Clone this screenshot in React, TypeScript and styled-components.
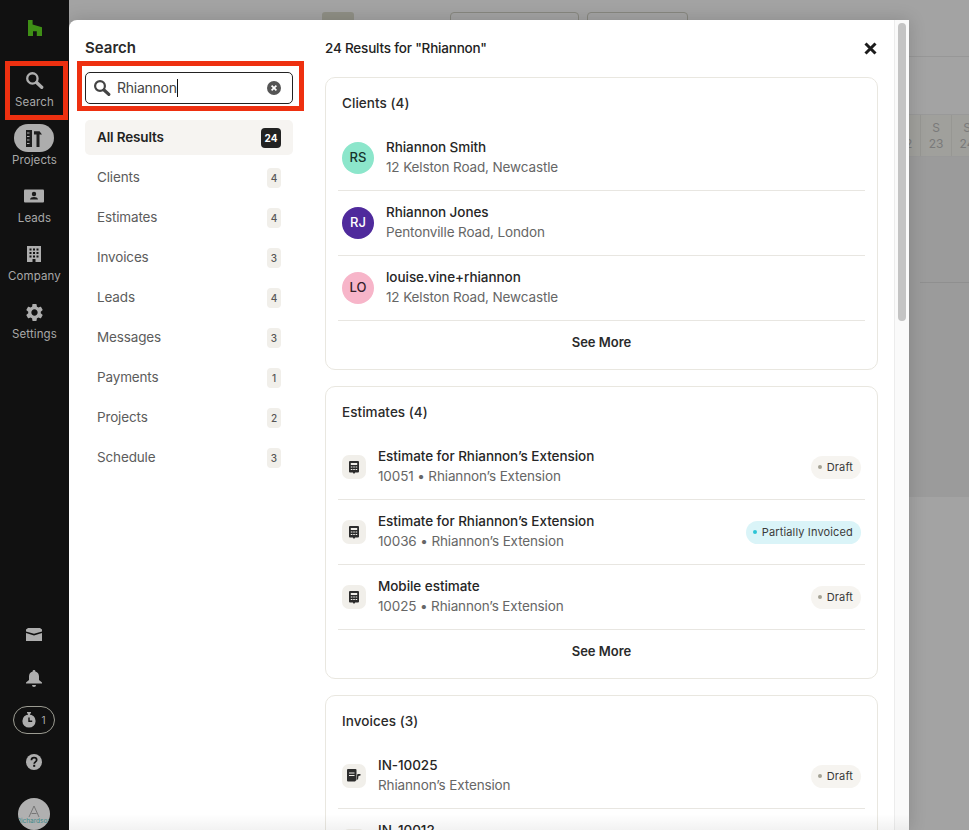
import React from "react";
import styled, { createGlobalStyle } from "styled-components";
import { MdSettings } from "react-icons/md";

const Global = createGlobalStyle`
  html, body { margin: 0; padding: 0; background: #a2a2a2; overflow: hidden; }
  *, *::before, *::after { box-sizing: border-box; }
  body { font-family: Inter, "Liberation Sans", sans-serif; }
`;

const Page = styled.div`
  width: 969px;
  height: 830px;
  display: flex;
  overflow: hidden;
`;

const Sidebar = styled.nav`
  width: 69px;
  flex: none;
  height: 830px;
  background: #111;
  display: flex;
  flex-direction: column;
  align-items: center;
  padding-top: 20px;
  color: #aeaeae;
  position: relative;
  z-index: 1;
`;

const LogoBox = styled.div`
  height: 46px;
  flex: none;
`;

const NavItem = styled.div<{ $marked?: boolean }>`
  width: 69px;
  height: 58px;
  flex: none;
  position: relative;
  display: flex;
  flex-direction: column;
  align-items: center;
  ${(p) =>
    p.$marked &&
    `&::after {
      content: "";
      position: absolute;
      left: 5px; top: -5px;
      width: 63px; height: 59px;
      border: 5px solid #ee3010;
    }`}
`;

const NavIcon = styled.div<{ $pill?: boolean }>`
  width: 40px;
  height: 28px;
  margin-left: -1px;
  display: flex;
  align-items: center;
  justify-content: center;
  border-radius: 14px;
  background: ${(p) => (p.$pill ? "#adadad" : "transparent")};
  color: ${(p) => (p.$pill ? "#1c1c1c" : "#aeaeae")};
`;

const NavLabel = styled.span`
  font-size: 11.5px;
  line-height: 16px;
  letter-spacing: 0.1px;
  color: #a8a8a8;
  white-space: nowrap;
`;

const SideBottom = styled.div`
  margin-top: auto;
  display: flex;
  flex-direction: column;
  align-items: center;
  height: 214px;
  flex: none;
`;

const SideIcon = styled.div<{ $h: number }>`
  height: ${(p) => p.$h}px;
  margin-left: -1px;
  display: flex;
  align-items: center;
  justify-content: center;
  flex: none;
`;

const TimerPill = styled.div`
  width: 42px;
  height: 28px;
  margin: 2px 0 0 -1px;
  flex: none;
  border: 1px solid #9c9c92;
  border-radius: 14px;
  display: flex;
  align-items: center;
  justify-content: center;
  gap: 5px;
  font-size: 10px;
  color: #aeaeae;
`;

const OrgAvatar = styled.div`
  width: 32px;
  height: 32px;
  margin: 8px 0 0 -1px;
  flex: none;
  border-radius: 50%;
  background: #b0b0b0;
  display: flex;
  flex-direction: column;
  align-items: center;
  justify-content: center;
  overflow: hidden;
  padding-top: 1px;
`;

const OrgName = styled.span`
  font-size: 6.5px;
  line-height: 7px;
  color: #3f8b8b;
  white-space: nowrap;
`;

const Main = styled.main`
  position: relative;
  flex: 1;
  height: 830px;
  overflow: hidden;
  background: #a3a3a3;
`;

const TopBar = styled.div`
  height: 57px;
  border-bottom: 1px solid #979797;
  padding: 12px 0 0 253px;
  display: flex;
  align-items: flex-start;
`;

const GhostTab = styled.div`
  width: 32px;
  height: 20px;
  background: #8f8f85;
  border-radius: 3px;
  margin-right: 96px;
`;

const GhostButton = styled.div<{ $w: number }>`
  width: ${(p) => p.$w}px;
  height: 30px;
  margin-right: 8px;
  border: 1px solid #87877f;
  border-radius: 4px;
`;

const CalendarHead = styled.div`
  height: 57px;
`;

const DayRow = styled.div`
  height: 43px;
  padding-left: 820px;
  display: flex;
  border-top: 1px solid #999;
  border-bottom: 1px solid #999;
  background: #a0a09c;
`;

const DayCell = styled.div`
  width: 31px;
  flex: none;
  border-left: 1px solid #979793;
  text-align: center;
  font-size: 12px;
  line-height: 16px;
  padding-top: 5px;
  color: #7a7a7a;
`;

const CalendarBody = styled.div`
  height: 340px;
  background: #9b9b9b;
  padding-left: 851px;
`;

const BodyLine = styled.div`
  height: 126px;
  border-bottom: 1px solid #8f8f8f;
`;

const Modal = styled.section`
  position: absolute;
  left: 0;
  top: 20px;
  width: 840px;
  height: 810px;
  background: #fff;
  border-radius: 8px 0 0 0;
  box-shadow: 0 0 18px rgba(0, 0, 0, 0.16);
  display: flex;
  overflow: hidden;
  color: #222;
`;

const BottomFade = styled.div`
  position: absolute;
  left: 0;
  right: 0;
  bottom: 0;
  height: 16px;
  background: linear-gradient(rgba(0, 0, 0, 0), rgba(0, 0, 0, 0.05));
  pointer-events: none;
`;

const LeftPanel = styled.aside`
  width: 256px;
  flex: none;
  padding: 18px 32px 0 16px;
  display: flex;
  flex-direction: column;
`;

const PanelTitle = styled.h2`
  margin: 0 0 14px;
  font-size: 15px;
  line-height: 20px;
  font-weight: 600;
  color: #2a2a2a;
`;

const SearchWrap = styled.div`
  position: relative;
  height: 32px;
  margin-bottom: 16px;
  &::after {
    content: "";
    position: absolute;
    left: -8px;
    right: -11px;
    top: -11px;
    bottom: -7px;
    border: 5px solid #ee3010;
    pointer-events: none;
  }
`;

const SearchField = styled.div`
  height: 32px;
  border: 1px solid #222;
  border-radius: 5px;
  display: flex;
  align-items: center;
  padding: 0 11px 0 7px;
  font-size: 14px;
  color: #444;
`;

const SearchText = styled.span`
  margin-left: 6px;
  letter-spacing: -0.25px;
  border-right: 1px solid #111;
  line-height: 18px;
  white-space: nowrap;
`;

const ClearIcon = styled.span`
  margin-left: auto;
  display: flex;
`;

const FilterList = styled.div`
  display: flex;
  flex-direction: column;
  gap: 5px;
`;

const Filter = styled.div<{ $active?: boolean }>`
  height: 35px;
  display: flex;
  align-items: center;
  justify-content: space-between;
  padding: 0 12px 2px;
  border-radius: 5px;
  font-size: 13.5px;
  letter-spacing: -0.15px;
  font-weight: ${(p) => (p.$active ? 600 : 400)};
  color: ${(p) => (p.$active ? "#222" : "#5c5c5c")};
  background: ${(p) => (p.$active ? "#f6f4f1" : "transparent")};
`;

const Count = styled.span<{ $active?: boolean }>`
  height: 20px;
  margin-bottom: -2px;
  min-width: ${(p) => (p.$active ? 20 : 14)}px;
  display: flex;
  align-items: center;
  justify-content: center;
  border-radius: 4px;
  font-size: 10px;
  letter-spacing: 0;
  font-weight: ${(p) => (p.$active ? 700 : 500)};
  color: ${(p) => (p.$active ? "#fff" : "#555")};
  background: ${(p) => (p.$active ? "#222" : "#f1efea")};
`;

const Results = styled.div`
  flex: 1;
  min-width: 0;
  padding: 18px 16px 0 0;
  overflow: hidden;
`;

const ResultsHead = styled.header`
  height: 20px;
  margin-bottom: 19px;
  display: flex;
  align-items: center;
  justify-content: space-between;
  padding-right: 1px;
  font-size: 13.5px;
  font-weight: 500;
  letter-spacing: -0.2px;
`;

const Card = styled.article`
  border: 1px solid #e9e7e0;
  border-radius: 10px;
  padding: 15px 12px 6px;
  margin-bottom: 16px;
`;

const CardTitle = styled.h3`
  margin: 0 0 13px 4px;
  height: 20px;
  font-size: 13.5px;
  line-height: 20px;
  font-weight: 500;
  letter-spacing: 0.05px;
  color: #2a2a2a;
`;

const Row = styled.div`
  height: 65px;
  border-bottom: 1px solid #e8e6e1;
  display: flex;
  align-items: center;
  padding: 0 4px;
  gap: 12px;
`;

const Avatar = styled.div<{ $bg: string; $fg: string }>`
  width: 32px;
  height: 32px;
  flex: none;
  border-radius: 50%;
  display: flex;
  align-items: center;
  justify-content: center;
  font-size: 13px;
  font-weight: 500;
  padding-bottom: 2px;
  background: ${(p) => p.$bg};
  color: ${(p) => p.$fg};
`;

const Tile = styled.div`
  width: 24px;
  height: 24px;
  flex: none;
  border-radius: 7px;
  background: #f1efea;
  display: flex;
  align-items: center;
  justify-content: center;
`;

const RowText = styled.div`
  flex: 1;
  min-width: 0;
  padding-bottom: 2px;
`;

const RowTitle = styled.div`
  font-size: 13.5px;
  line-height: 20px;
  font-weight: 500;
  letter-spacing: -0.05px;
  color: #262626;
`;

const RowSub = styled.div`
  font-size: 13.5px;
  line-height: 20px;
  letter-spacing: -0.13px;
  color: #666;
`;

const Status = styled.span<{ $tone: "draft" | "info" }>`
  height: 23px;
  flex: none;
  display: inline-flex;
  align-items: center;
  gap: 5px;
  padding: 0 8px 0 6.5px;
  border-radius: 12px;
  font-size: 11px;
  letter-spacing: 0.15px;
  color: #3a3a3a;
  background: ${(p) => (p.$tone === "info" ? "#daf4f8" : "#f6f4f0")};
  &::before {
    content: "";
    width: 4px;
    height: 4px;
    border-radius: 50%;
    background: ${(p) => (p.$tone === "info" ? "#2cc4d6" : "#a5a295")};
  }
`;

const SeeMore = styled.div`
  height: 42px;
  display: flex;
  align-items: center;
  justify-content: center;
  font-size: 13px;
  font-weight: 600;
  color: #2a2a2a;
`;

const ScrollTrack = styled.div`
  width: 15px;
  flex: none;
  border-left: 1px solid #ececec;
  background: #fafafa;
  padding: 3px 3px 0 3px;
`;

const ScrollThumb = styled.div`
  height: 298px;
  border-radius: 4px;
  background: #c4c4c4;
`;

const SearchGlyph = ({ size = 18 }: { size?: number }) => (
  <svg width={size} height={size} viewBox="0 0 18 18" fill="none">
    <circle cx="7" cy="7" r="4.9" stroke="currentColor" strokeWidth="2.2" />
    <path d="M11 11l4.800 4.400" stroke="currentColor" strokeWidth="3.200" strokeLinecap="round" />
  </svg>
);

const HouzzLogo = () => (
  <svg width="14" height="16" viewBox="0 0 14 16">
    <path d="M0 0h4.600v4.400L14 7.200V16H8.800v-4.800H5V16H0z" fill="#3f8f16" />
  </svg>
);

const ProjectsGlyph = () => (
  <svg width="16" height="17" viewBox="0 0 16 17" fill="currentColor">
    <path d="M0 0h6v17H0zM1 2.500v1h2.500v-1zM1 6v1h2.500V6zM1 9.500v1h2.500v-1zM1 13v1h2.500v-1z" fillRule="evenodd" />
    <path d="M8 1.200h5.500L16 4.600h-2.500V17h-3V4.600H8z" />
  </svg>
);

const LeadsGlyph = () => (
  <svg width="20" height="14" viewBox="0 0 20 14">
    <rect width="20" height="13" y="0.5" rx="1" fill="#aeaeae" />
    <circle cx="10" cy="5" r="2.200" fill="#1c1c1c" />
    <path d="M6 10.500c.4-2 2-2.600 4-2.600s3.600.6 4 2.600z" fill="#1c1c1c" />
  </svg>
);

const CompanyGlyph = () => (
  <svg width="14" height="16" viewBox="0 0 14 16" fill="#aeaeae">
    <path
      fillRule="evenodd"
      d="M0 0h14v16H8.500v-3h-3v3H0zM2.500 2.500v2h2v-2zM6 2.500v2h2v-2zM9.500 2.500v2h2v-2zM2.500 6v2h2V6zM6 6v2h2V6zM9.500 6v2h2V6zM2.500 9.500v2h2v-2zM6 9.500v2h2v-2zM9.500 9.500v2h2v-2z"
    />
  </svg>
);

const MailGlyph = () => (
  <svg width="16" height="13" viewBox="0 0 16 13" fill="#aeaeae">
    <path d="M0 1.600 2 0h12l2 1.600v1.800L8 5.800 0 3.400zM0 5l8 2.600L16 5v8H0z" />
  </svg>
);

const BellGlyph = () => (
  <svg width="16" height="17" viewBox="0 0 16 17" fill="#aeaeae">
    <path d="M8 0a1.300 1.300 0 0 1 1.300 1.500C11.800 2 13 4 13 6.500V10l3 2.500V13.500H0v-1L3 10V6.500C3 4 4.200 2 6.700 1.500A1.300 1.300 0 0 1 8 0z" />
    <path d="M6 15h4a2 2 0 0 1-4 0z" />
  </svg>
);

const TimerGlyph = () => (
  <svg width="14" height="16" viewBox="0 0 14 16">
    <path d="M5 0h4v1.500H8v1.600H6V1.500H5z" fill="#aeaeae" />
    <circle cx="7" cy="9" r="6.600" fill="#aeaeae" />
    <path d="M7 5.500V9.300h3.200" stroke="#111" strokeWidth="1.400" fill="none" />
  </svg>
);

const HelpGlyph = () => (
  <svg width="16" height="16" viewBox="0 0 16 16">
    <circle cx="8" cy="8" r="8" fill="#aeaeae" />
    <path d="M5.400 6.200C5.500 4.600 6.600 3.700 8 3.700s2.700.9 2.700 2.300c0 1.900-2.500 1.900-2.500 3.800" stroke="#111" strokeWidth="1.700" fill="none" />
    <rect x="7.200" y="10.800" width="2" height="2" fill="#111" />
  </svg>
);

const OrgMark = () => (
  <svg width="12" height="13" viewBox="0 0 12 12" fill="none" stroke="#6f6f6f" strokeWidth="0.9">
    <path d="M6 0.500 1 11.500M6 0.500l5 11M3.500 8h5" />
  </svg>
);

const ClearGlyph = () => (
  <svg width="14" height="14" viewBox="0 0 14 14">
    <circle cx="7" cy="7" r="7" fill="#555" />
    <path d="M4.600 4.600l4.800 4.800M9.400 4.600L4.600 9.400" stroke="#fff" strokeWidth="1.700" />
  </svg>
);

const CloseGlyph = () => (
  <svg width="13" height="13" viewBox="0 0 13 13">
    <path d="M1.500 1.500l10 10M11.500 1.500l-10 10" stroke="#1c1c1c" strokeWidth="3" />
  </svg>
);

const CalcGlyph = () => (
  <svg width="10" height="13" viewBox="0 0 10 13" fill="#2c2c2c">
    <path
      fillRule="evenodd"
      d="M0 1a1 1 0 0 1 1-1h8a1 1 0 0 1 1 1v9.500a1 1 0 0 1-1 1H6.200L5 13l-1.200-1.500H1a1 1 0 0 1-1-1zM1.800 2v2h6.400V2zM1.800 5.500v1h1.600v-1zM4.200 5.500v1h1.600v-1zM6.600 5.500v1h1.600v-1zM1.800 8v1h1.600V8zM4.200 8v1h1.600V8zM6.600 8v1h1.600V8z"
    />
  </svg>
);

const InvoiceGlyph = () => (
  <svg width="14" height="14" viewBox="0 0 14 14" fill="#2c2c2c">
    <path
      fillRule="evenodd"
      d="M0 1a1 1 0 0 1 1-1h7.500a1 1 0 0 1 1 1v10l-1.500 1.500H1a1 1 0 0 1-1-1zM2 3.500v1h5.500v-1zM2 6v1h5.500V6z"
    />
    <path d="M10.500 5h3v1.400l-2 .6-.5 3.500h-1.200L10 6.500z" />
  </svg>
);

type Item = {
  title: string;
  sub: string;
  initials?: [string, string, string];
  glyph?: "calc" | "invoice";
  status?: [string, "draft" | "info"];
};

const sections: { title: string; more: boolean; items: Item[] }[] = [
  {
    title: "Clients (4)",
    more: true,
    items: [
      { title: "Rhiannon Smith", sub: "12 Kelston Road, Newcastle", initials: ["RS", "#8ce6cb", "#17332b"] },
      { title: "Rhiannon Jones", sub: "Pentonville Road, London", initials: ["RJ", "#4f2a9c", "#ffffff"] },
      { title: "louise.vine+rhiannon", sub: "12 Kelston Road, Newcastle", initials: ["LO", "#f7b5c9", "#33212a"] },
    ],
  },
  {
    title: "Estimates (4)",
    more: true,
    items: [
      { title: "Estimate for Rhiannon’s Extension", sub: "10051 • Rhiannon’s Extension", glyph: "calc", status: ["Draft", "draft"] },
      { title: "Estimate for Rhiannon’s Extension", sub: "10036 • Rhiannon’s Extension", glyph: "calc", status: ["Partially Invoiced", "info"] },
      { title: "Mobile estimate", sub: "10025 • Rhiannon’s Extension", glyph: "calc", status: ["Draft", "draft"] },
    ],
  },
  {
    title: "Invoices (3)",
    more: false,
    items: [
      { title: "IN-10025", sub: "Rhiannon’s Extension", glyph: "invoice", status: ["Draft", "draft"] },
      { title: "IN-10012", sub: "Rhiannon’s Extension", glyph: "invoice", status: ["Draft", "draft"] },
    ],
  },
];

const filters: [string, string][] = [
  ["Clients", "4"],
  ["Estimates", "4"],
  ["Invoices", "3"],
  ["Leads", "4"],
  ["Messages", "3"],
  ["Payments", "1"],
  ["Projects", "2"],
  ["Schedule", "3"],
];

export default function App() {
  return (
    <Page>
      <Global />
      <Sidebar>
        <LogoBox>
          <HouzzLogo />
        </LogoBox>
        <NavItem $marked>
          <NavIcon>
            <SearchGlyph size={19} />
          </NavIcon>
          <NavLabel>Search</NavLabel>
        </NavItem>
        <NavItem>
          <NavIcon $pill>
            <ProjectsGlyph />
          </NavIcon>
          <NavLabel>Projects</NavLabel>
        </NavItem>
        <NavItem>
          <NavIcon>
            <LeadsGlyph />
          </NavIcon>
          <NavLabel>Leads</NavLabel>
        </NavItem>
        <NavItem>
          <NavIcon>
            <CompanyGlyph />
          </NavIcon>
          <NavLabel>Company</NavLabel>
        </NavItem>
        <NavItem>
          <NavIcon>
            <MdSettings size={21} />
          </NavIcon>
          <NavLabel>Settings</NavLabel>
        </NavItem>
        <SideBottom>
          <SideIcon $h={36}>
            <MailGlyph />
          </SideIcon>
          <SideIcon $h={52}>
            <BellGlyph />
          </SideIcon>
          <TimerPill>
            <TimerGlyph />1
          </TimerPill>
          <SideIcon $h={56}>
            <HelpGlyph />
          </SideIcon>
          <OrgAvatar>
            <OrgMark />
            <OrgName>Richardson</OrgName>
          </OrgAvatar>
        </SideBottom>
      </Sidebar>
      <Main>
        <TopBar>
          <GhostTab />
          <GhostButton $w={129} />
          <GhostButton $w={101} />
        </TopBar>
        <CalendarHead />
        <DayRow>
          <DayCell>
            S<br />
            22
          </DayCell>
          <DayCell>
            S<br />
            23
          </DayCell>
          <DayCell>
            S<br />
            24
          </DayCell>
        </DayRow>
        <CalendarBody>
          <BodyLine />
        </CalendarBody>
        <Modal>
          <LeftPanel>
            <PanelTitle>Search</PanelTitle>
            <SearchWrap>
              <SearchField>
                <SearchGlyph />
                <SearchText>Rhiannon</SearchText>
                <ClearIcon>
                  <ClearGlyph />
                </ClearIcon>
              </SearchField>
            </SearchWrap>
            <FilterList>
              <Filter $active>
                All Results
                <Count $active>24</Count>
              </Filter>
              {filters.map(([name, n]) => (
                <Filter key={name}>
                  {name}
                  <Count>{n}</Count>
                </Filter>
              ))}
            </FilterList>
          </LeftPanel>
          <Results>
            <ResultsHead>
              24 Results for "Rhiannon"
              <CloseGlyph />
            </ResultsHead>
            {sections.map((s) => (
              <Card key={s.title}>
                <CardTitle>{s.title}</CardTitle>
                {s.items.map((it) => (
                  <Row key={it.sub + it.title}>
                    {it.initials && (
                      <Avatar $bg={it.initials[1]} $fg={it.initials[2]}>
                        {it.initials[0]}
                      </Avatar>
                    )}
                    {it.glyph && <Tile>{it.glyph === "calc" ? <CalcGlyph /> : <InvoiceGlyph />}</Tile>}
                    <RowText>
                      <RowTitle>{it.title}</RowTitle>
                      <RowSub>{it.sub}</RowSub>
                    </RowText>
                    {it.status && <Status $tone={it.status[1]}>{it.status[0]}</Status>}
                  </Row>
                ))}
                {s.more && <SeeMore>See More</SeeMore>}
              </Card>
            ))}
          </Results>
          <ScrollTrack>
            <ScrollThumb />
          </ScrollTrack>
          <BottomFade />
        </Modal>
      </Main>
    </Page>
  );
}
